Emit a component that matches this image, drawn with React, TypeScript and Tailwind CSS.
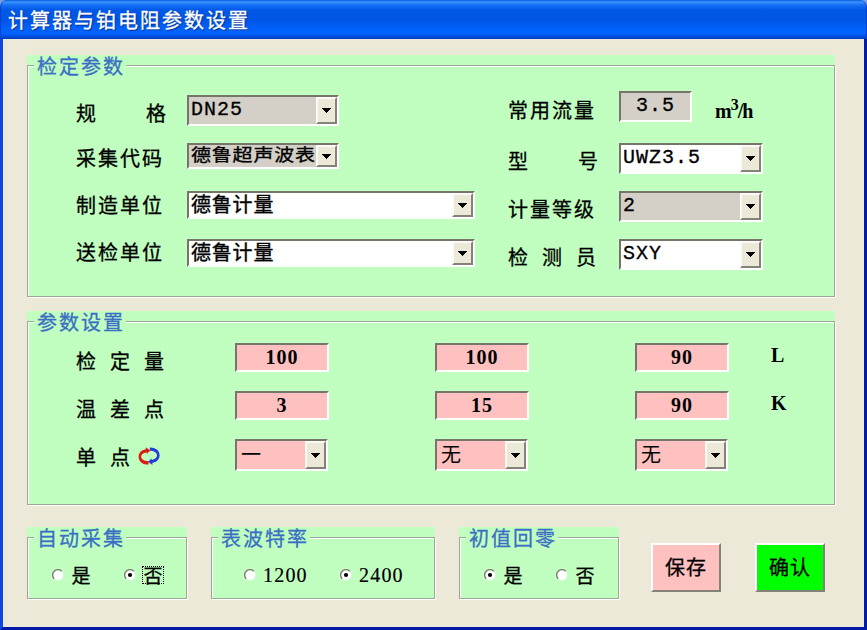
import type { ReactNode } from 'react';

const cjk = "font-['Noto_Sans_CJK_SC',sans-serif]";

function Group({ title, className, children }: { title: string; className: string; children: ReactNode }) {
  return (
    <section className={`flex shrink-0 flex-col bg-[#c0ffc0] pt-[10px] ${className}`}>
      <div className="min-h-0 flex-1 border border-[#9ba893] shadow-[1px_1px_0_#fff,inset_1px_1px_0_#fff]">
        <h2 className="-mt-[10px] ml-[6px] h-5 w-[92px] bg-[#c0ffc0] pl-[3px] text-[20px] leading-5 tracking-[2px] whitespace-nowrap text-[#3a6fc4] [-webkit-text-stroke:0.3px]">
          {title}
        </h2>
        {children}
      </div>
    </section>
  );
}

const sunken = 'border-2 border-t-[#75756b] border-l-[#75756b] border-r-white border-b-white';

function Combo({ className, textClass, children }: { className: string; textClass: string; children: ReactNode }) {
  return (
    <div className={`flex shrink-0 ${sunken} ${className}`}>
      <div className={`min-w-0 flex-1 whitespace-nowrap ${textClass}`}>{children}</div>
      <div className="flex w-[21px] shrink-0 items-center justify-center border-2 border-t-[#fbfaf4] border-r-[#85827a] border-b-[#85827a] border-l-[#fbfaf4] bg-[#ece9d8]">
        <svg width="9" height="5" viewBox="0 0 9 5" shapeRendering="crispEdges">
          <path d="M0 0h9v1h-1v1h-1v1h-1v1h-1v1h-1v-1h-1v-1h-1v-1h-1v-1h-1z" />
        </svg>
      </div>
    </div>
  );
}

function Label({ className, children }: { className: string; children: ReactNode }) {
  return (
    <span className={`h-6 shrink-0 text-[20px] leading-6 tracking-[2px] whitespace-pre [word-spacing:5.5px] [-webkit-text-stroke:0.3px] ${className}`}>
      {children}
    </span>
  );
}

const mono = "font-['Liberation_Mono',monospace] text-[20px] tracking-[1px] [-webkit-text-stroke:0.3px]";
const comboMono = `pl-[2px] pt-[2px] leading-[22px] ${mono}`;
const comboCjk = 'pl-[2px] text-[20px] leading-[21px] tracking-[0.8px] [-webkit-text-stroke:0.4px]';
const choice = 'pl-[4px] pt-[1px] text-[20px] leading-[24px]';

function NumberBox({ value, className }: { value: string; className: string }) {
  return (
    <div className={`h-[29px] w-[94px] shrink-0 bg-[#ffc0c0] text-center font-['Liberation_Serif',serif] text-[20px] leading-[25px] font-bold tracking-[1px] ${sunken} ${className}`}>
      {value}
    </div>
  );
}

function Radio({ label, checked, focused, latin, className }: { label: string; checked?: boolean; focused?: boolean; latin?: boolean; className?: string }) {
  return (
    <label className={`flex h-5 items-center ${className ?? ''}`}>
      <svg width="12" height="12" viewBox="0 0 12 12" className="shrink-0">
        <circle cx="6" cy="6" r="5.3" fill="#fff" />
        <path d="M2.2 9.8A5.3 5.3 0 0 1 9.8 2.2" fill="none" stroke="#77776c" strokeWidth="1.3" />
        {checked && <circle cx="6" cy="6" r="2.1" fill="#000" />}
      </svg>
      <span
        className={`ml-[6px] border border-dotted whitespace-nowrap ${focused ? 'border-black' : 'border-transparent'} ${
          latin
            ? "h-5 font-['Liberation_Serif',serif] text-[20px] leading-[19px] tracking-[1.2px] [-webkit-text-stroke:0.2px]"
            : 'flex h-[18px] w-[22px] items-center justify-center text-[19px] leading-[18px] [-webkit-text-stroke:0.3px]'
        }`}
      >
        {label}
      </span>
    </label>
  );
}

function SwapIcon() {
  return (
    <svg width="22" height="22" viewBox="0 0 22 22" className="shrink-0">
      <path d="M10.6 19.6C4 19.8 0.6 16 0.6 11.8C0.6 7.8 3.4 5 7.8 4.2V2.2L12.2 5.4L8.8 9V7.2C5.4 7.8 3.2 9.4 3.2 11.6C3.2 14.4 6.4 16.2 10.6 16.2Z" fill="#d91c12" />
      <path d="M11.8 2.4C18.2 2.2 21.6 6 21.6 10.2C21.6 14.2 18.8 17 14.4 17.8V20L10.2 16.8L13.6 13.2V15C17 14.2 19 12.6 19 10.4C19 7.6 16 5.8 11.8 5.8Z" fill="#263bd6" />
    </svg>
  );
}

export default function App() {
  return (
    <main className={`flex h-[630px] w-[867px] flex-col overflow-hidden bg-[#7a9de8] text-black ${cjk}`}>
      <header className="h-[39px] shrink-0 rounded-t-[7px] border-x border-[#0a3fd0] bg-[linear-gradient(#0a5be0_0px,#3b94ff_2px,#1670f4_5px,#0058e6_10px,#0055e5_20px,#0060fb_28px,#0062ff_34px,#0048d4_37px,#003cc0_39px)] pl-[7px]">
        <h1 className="pt-[8px] text-[20px] leading-6 tracking-[2px] whitespace-nowrap text-white [-webkit-text-stroke:0.3px] [text-shadow:1px_1px_1px_#062a80]">
          计算器与铂电阻参数设置
        </h1>
      </header>
      <div className="flex min-h-0 flex-1 flex-col border-x-3 border-b-3 border-r-[#0019a8] border-b-[#0019a8] border-l-[#0a48e0] bg-[#ece9d8] pt-[16px] pl-[24px]">
        <Group title="检定参数" className="h-[242px] w-[808px]">
          <div className="flex pl-[48px]">
            <div className="flex w-[432px] flex-col pt-[19px]">
              <div className="flex h-12 items-start">
                <Label className="mt-[6px] w-[111px]">规    格</Label>
                <Combo className="h-[31px] w-[152px] bg-[#d4d0c8]" textClass={comboMono}>DN25</Combo>
              </div>
              <div className="flex h-12 items-start">
                <Label className="mt-[3px] w-[111px]">采集代码</Label>
                <Combo className="h-[26px] w-[152px] bg-[#d4d0c8]" textClass={comboCjk}>
                  <span className="-mt-[2px] block origin-center scale-y-[0.85]">德鲁超声波表</span>
                </Combo>
              </div>
              <div className="flex h-12 items-start">
                <Label className="mt-[2px] w-[111px]">制造单位</Label>
                <Combo className="h-[28px] w-[288px] bg-white" textClass={comboCjk}>德鲁计量</Combo>
              </div>
              <div className="flex h-12 items-start">
                <Label className="mt-[1px] w-[111px]">送检单位</Label>
                <Combo className="h-[28px] w-[288px] bg-white" textClass={comboCjk}>德鲁计量</Combo>
              </div>
            </div>
            <div className="flex flex-col pt-[15px]">
              <div className="flex h-[52px] items-start">
                <Label className="mt-[7px] w-[111px]">常用流量</Label>
                <div className={`h-[31px] w-[73px] bg-[#d4d0c8] text-center leading-[26px] ${sunken} ${mono}`}>3.5</div>
                <span className="mt-[8px] ml-[23px] font-['Liberation_Serif',serif] text-[20px] leading-6 font-bold tracking-[-1px] whitespace-nowrap">
                  m<sup className="relative top-[-8px] align-baseline text-[16px] leading-none">3</sup>/h
                </span>
              </div>
              <div className="flex h-12 items-start">
                <Label className="mt-[6px] w-[111px]">型    号</Label>
                <Combo className="h-[31px] w-[144px] bg-white" textClass={comboMono}>UWZ3.5</Combo>
              </div>
              <div className="flex h-12 items-start">
                <Label className="mt-[6px] w-[111px]">计量等级</Label>
                <Combo className="h-[31px] w-[144px] bg-[#d4d0c8]" textClass={comboMono}>2</Combo>
              </div>
              <div className="flex h-12 items-start">
                <Label className="mt-[6px] w-[111px]">检 测 员</Label>
                <Combo className="h-[31px] w-[144px] bg-white" textClass={comboMono}>SXY</Combo>
              </div>
            </div>
          </div>
        </Group>

        <Group title="参数设置" className="mt-[14px] h-[194px] w-[808px]">
          <div className="flex flex-col pt-[11px] pl-[48px]">
            <div className="flex h-12 items-start">
              <Label className="mt-[6px] w-[159px]">检 定 量</Label>
              <NumberBox value="100" className="" />
              <NumberBox value="100" className="ml-[106px]" />
              <NumberBox value="90" className="ml-[106px]" />
              <span className="ml-[42px] font-['Liberation_Serif',serif] text-[20px] leading-6 font-bold">L</span>
            </div>
            <div className="flex h-12 items-start">
              <Label className="mt-[6px] w-[159px]">温 差 点</Label>
              <NumberBox value="3" className="" />
              <NumberBox value="15" className="ml-[106px]" />
              <NumberBox value="90" className="ml-[106px]" />
              <span className="ml-[42px] font-['Liberation_Serif',serif] text-[20px] leading-6 font-bold">K</span>
            </div>
            <div className="flex h-12 items-start">
              <div className="mt-[6px] flex w-[159px]">
                <Label className="w-[62px]">单 点</Label>
                <SwapIcon />
              </div>
              <Combo className="h-[32px] w-[93px] bg-[#ffc0c0]" textClass={choice}>一</Combo>
              <Combo className="ml-[107px] h-[32px] w-[93px] bg-[#ffc0c0]" textClass={choice}>无</Combo>
              <Combo className="ml-[107px] h-[32px] w-[93px] bg-[#ffc0c0]" textClass={choice}>无</Combo>
            </div>
          </div>
        </Group>

        <div className="mt-[22px] flex items-start">
          <Group title="自动采集" className="h-[72px] w-[160px]">
            <div className="flex pt-[17px] pl-[24px]">
              <Radio label="是" className="w-[72px]" />
              <Radio label="否" checked focused />
            </div>
          </Group>
          <Group title="表波特率" className="ml-[24px] h-[72px] w-[224px]">
            <div className="flex pt-[17px] pl-[32px]">
              <Radio label="1200" latin className="w-[96px]" />
              <Radio label="2400" latin checked />
            </div>
          </Group>
          <Group title="初值回零" className="ml-[24px] h-[72px] w-[160px]">
            <div className="flex pt-[17px] pl-[24px]">
              <Radio label="是" checked className="w-[72px]" />
              <Radio label="否" />
            </div>
          </Group>
          <button className="mt-[16px] ml-[32px] h-[49px] w-[70px] border-2 border-t-white border-r-[#85827a] border-b-[#85827a] border-l-white bg-[#ffc0c0] pb-[2px] text-[20px] tracking-[1px] [-webkit-text-stroke:0.3px]">
            保存
          </button>
          <button className="mt-[16px] ml-[34px] h-[49px] w-[70px] border-2 border-t-white border-r-[#85827a] border-b-[#85827a] border-l-white bg-[#00ff00] pb-[2px] text-[20px] tracking-[1px] [-webkit-text-stroke:0.3px]">
            确认
          </button>
        </div>
      </div>
    </main>
  );
}
